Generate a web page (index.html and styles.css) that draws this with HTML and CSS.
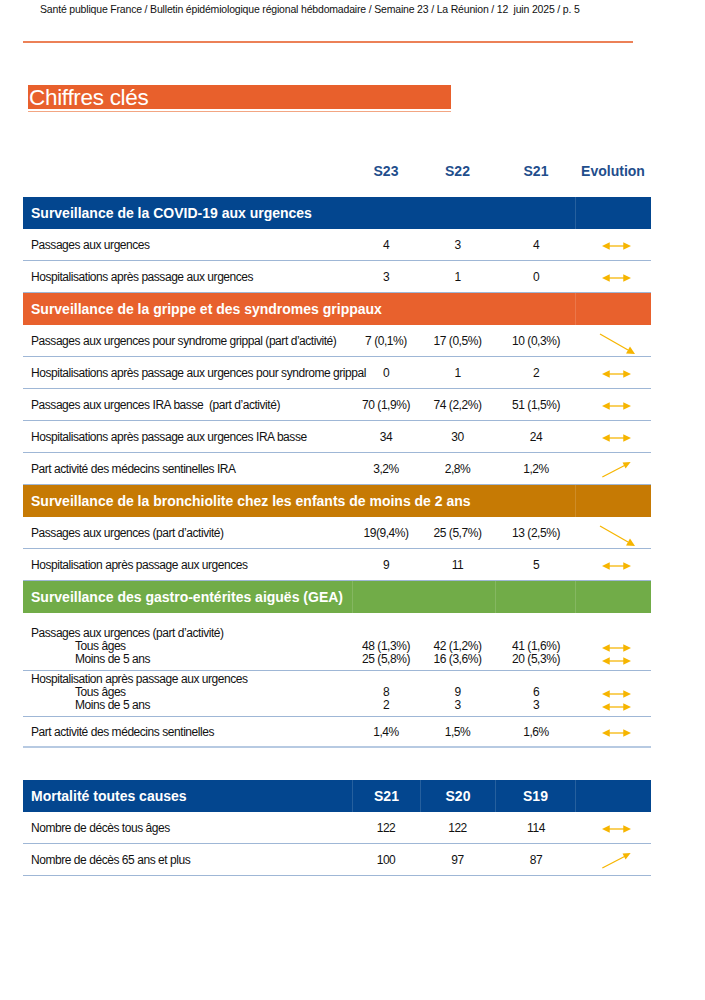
FILE: index.html
```html
<!DOCTYPE html>
<html lang="fr">
<head>
<meta charset="utf-8">
<title>Chiffres clés</title>
<link rel="stylesheet" href="styles.css">
</head>
<body>
<div class="page">
  <div class="running">Santé publique France / Bulletin épidémiologique régional hébdomadaire / Semaine 23 / La Réunion / 12&nbsp; juin 2025 / p. 5</div>
  <div class="rule"></div>

  <div class="title-wrap">
    <h1 class="title">Chiffres clés</h1>
  </div>

  <div class="table">
    <div class="colhead">
      <div></div><div>S23</div><div>S22</div><div>S21</div><div>Evolution</div>
    </div>

    <div class="sec sec-blue">
      <div class="sec-label">Surveillance de la COVID-19 aux urgences</div><div class="sep-evo"></div>
    </div>
    <div class="row"><div class="lab">Passages aux urgences</div><div>4</div><div>3</div><div>4</div><div class="evo"><svg class="a-h" viewBox="0 0 30 10"><path d="M6 5H24"/><path class="hd" d="M0 5L8 1V9ZM30 5L22 1V9Z"/></svg></div></div>
    <div class="row"><div class="lab">Hospitalisations après passage aux urgences</div><div>3</div><div>1</div><div>0</div><div class="evo"><svg class="a-h" viewBox="0 0 30 10"><path d="M6 5H24"/><path class="hd" d="M0 5L8 1V9ZM30 5L22 1V9Z"/></svg></div></div>

    <div class="sec sec-orange">
      <div class="sec-label">Surveillance de la grippe et des syndromes grippaux</div><div class="sep-evo"></div>
    </div>
    <div class="row"><div class="lab">Passages aux urgences pour syndrome grippal (part d’activité)</div><div>7 (0,1%)</div><div>17 (0,5%)</div><div>10 (0,3%)</div><div class="evo"><svg class="a-d" viewBox="0 0 37 22"><path d="M1 1L29 17"/><path class="hd" d="M36 21L27 20.5L31 13.5Z"/></svg></div></div>
    <div class="row"><div class="lab">Hospitalisations après passage aux urgences pour syndrome grippal</div><div>0</div><div>1</div><div>2</div><div class="evo"><svg class="a-h" viewBox="0 0 30 10"><path d="M6 5H24"/><path class="hd" d="M0 5L8 1V9ZM30 5L22 1V9Z"/></svg></div></div>
    <div class="row"><div class="lab">Passages aux urgences IRA basse&nbsp; (part d’activité)</div><div>70 (1,9%)</div><div>74 (2,2%)</div><div>51 (1,5%)</div><div class="evo"><svg class="a-h" viewBox="0 0 30 10"><path d="M6 5H24"/><path class="hd" d="M0 5L8 1V9ZM30 5L22 1V9Z"/></svg></div></div>
    <div class="row"><div class="lab">Hospitalisations après passage aux urgences IRA basse</div><div>34</div><div>30</div><div>24</div><div class="evo"><svg class="a-h" viewBox="0 0 30 10"><path d="M6 5H24"/><path class="hd" d="M0 5L8 1V9ZM30 5L22 1V9Z"/></svg></div></div>
    <div class="row"><div class="lab">Part activité des médecins sentinelles IRA</div><div>3,2%</div><div>2,8%</div><div>1,2%</div><div class="evo"><svg class="a-u" viewBox="0 0 32 18"><path d="M1 17L25 4.5"/><path class="hd" d="M31 1L25.6 7.9L22.4 1.7Z"/></svg></div></div>

    <div class="sec sec-ochre">
      <div class="sec-label">Surveillance de la bronchiolite chez les enfants de moins de 2 ans</div><div class="sep-evo"></div>
    </div>
    <div class="row"><div class="lab">Passages aux urgences (part d’activité)</div><div>19(9,4%)</div><div>25 (5,7%)</div><div>13 (2,5%)</div><div class="evo"><svg class="a-d" viewBox="0 0 37 22"><path d="M1 1L29 17"/><path class="hd" d="M36 21L27 20.5L31 13.5Z"/></svg></div></div>
    <div class="row"><div class="lab">Hospitalisation après passage aux urgences</div><div>9</div><div>11</div><div>5</div><div class="evo"><svg class="a-h" viewBox="0 0 30 10"><path d="M6 5H24"/><path class="hd" d="M0 5L8 1V9ZM30 5L22 1V9Z"/></svg></div></div>

    <div class="sec sec-green">
      <div class="sec-label">Surveillance des gastro-entérites aiguës (GEA)</div><div class="sep"></div><div class="sep-none"></div><div class="sep"></div><div class="sep-evo"></div>
    </div>
    <div class="block block-1">
      <div class="brow"><div class="lab">Passages aux urgences (part d’activité)</div><div></div><div></div><div></div><div></div></div>
      <div class="brow"><div class="lab sub">Tous âges</div><div>48 (1,3%)</div><div>42 (1,2%)</div><div>41 (1,6%)</div><div class="evo"><svg class="a-h" viewBox="0 0 30 10"><path d="M6 5H24"/><path class="hd" d="M0 5L8 1V9ZM30 5L22 1V9Z"/></svg></div></div>
      <div class="brow"><div class="lab sub">Moins de 5 ans</div><div>25 (5,8%)</div><div>16 (3,6%)</div><div>20 (5,3%)</div><div class="evo"><svg class="a-h" viewBox="0 0 30 10"><path d="M6 5H24"/><path class="hd" d="M0 5L8 1V9ZM30 5L22 1V9Z"/></svg></div></div>
    </div>
    <div class="block block-2">
      <div class="brow"><div class="lab">Hospitalisation après passage aux urgences</div><div></div><div></div><div></div><div></div></div>
      <div class="brow"><div class="lab sub">Tous âges</div><div>8</div><div>9</div><div>6</div><div class="evo"><svg class="a-h" viewBox="0 0 30 10"><path d="M6 5H24"/><path class="hd" d="M0 5L8 1V9ZM30 5L22 1V9Z"/></svg></div></div>
      <div class="brow"><div class="lab sub">Moins de 5 ans</div><div>2</div><div>3</div><div>3</div><div class="evo"><svg class="a-h" viewBox="0 0 30 10"><path d="M6 5H24"/><path class="hd" d="M0 5L8 1V9ZM30 5L22 1V9Z"/></svg></div></div>
    </div>
    <div class="row row-last"><div class="lab">Part activité des médecins sentinelles</div><div>1,4%</div><div>1,5%</div><div>1,6%</div><div class="evo"><svg class="a-h" viewBox="0 0 30 10"><path d="M6 5H24"/><path class="hd" d="M0 5L8 1V9ZM30 5L22 1V9Z"/></svg></div></div>
  </div>

  <div class="table table-mort">
    <div class="sec sec-blue sec-cols">
      <div class="sec-label">Mortalité toutes causes</div><div class="sep">S21</div><div class="sep">S20</div><div class="sep">S19</div><div class="sep-evo"></div>
    </div>
    <div class="row"><div class="lab">Nombre de décès tous âges</div><div>122</div><div>122</div><div>114</div><div class="evo"><svg class="a-h" viewBox="0 0 30 10"><path d="M6 5H24"/><path class="hd" d="M0 5L8 1V9ZM30 5L22 1V9Z"/></svg></div></div>
    <div class="row"><div class="lab">Nombre de décès 65 ans et plus</div><div>100</div><div>97</div><div>87</div><div class="evo"><svg class="a-u" viewBox="0 0 32 18"><path d="M1 17L25 4.5"/><path class="hd" d="M31 1L25.6 7.9L22.4 1.7Z"/></svg></div></div>
  </div>
</div>
</body>
</html>
```

FILE: styles.css
```css
* { box-sizing: border-box; }
html, body { margin: 0; padding: 0; background: #fff; }
body {
  font-family: "Liberation Sans", Arial, sans-serif;
  color: #111;
  width: 705px;
}
.page { padding-top: 3px; }

.running {
  padding-left: 40px;
  font-size: 10.5px;
  line-height: 12px;
  letter-spacing: -0.18px;
  color: #111;
  white-space: nowrap;
}
.rule {
  margin: 26px 0 0 23px;
  width: 610px;
  height: 2px;
  background: #EC8157;
}

.title-wrap {
  margin: 42px 0 0 28px;
  width: 423px;
  padding-bottom: 2px;
  border-bottom: 1px solid #F3A683;
}
.title {
  margin: 0;
  height: 24px;
  background: #E8602C;
  color: #fff;
  font-weight: normal;
  font-size: 22.5px;
  letter-spacing: -0.3px;
  line-height: 25px;
  padding-left: 1px;
}

.table {
  margin-left: 23px;
  width: 628px;
}
.colhead, .sec, .row, .brow {
  display: grid;
  grid-template-columns: 329px 68px 75px 80px 76px;
  align-items: center;
}
.colhead {
  margin-top: 48px;
  height: 22px;
  margin-bottom: 15px;
  font-weight: bold;
  font-size: 14px;
  color: #1F4E8C;
  text-align: center;
}
.colhead > div:nth-child(4) { padding-left: 2px; }

.sec {
  height: 32px;
  color: #fff;
  font-weight: bold;
  font-size: 14px;
  align-items: stretch;
}
.sec-label {
  grid-column: 1 / span 4;
  padding-left: 8px;
  display: flex;
  align-items: center;
  white-space: nowrap;
}
.sec-cols .sec-label, .sec-green .sec-label { grid-column: auto; }
.sep, .sep-none, .sep-evo {
  display: flex;
  align-items: center;
  justify-content: center;
}
.sep { border-left: 1px solid rgba(255,255,255,0.14); }
.sep-evo { grid-column: 5; border-left: 1px solid rgba(255,255,255,0.14); }
.sec-blue { background: #03468F; }
.sec-orange { background: #E8612D; }
.sec-ochre { background: #C67A04; }
.sec-green { background: #71AC48; }

.row {
  height: 32px;
  border-bottom: 1px solid #9FB7D6;
  font-size: 12px;
  letter-spacing: -0.45px;
}
.row > div, .brow > div { text-align: center; white-space: nowrap; }
.row > .lab, .brow > .lab { text-align: left; padding-left: 8px; }
.row > div:nth-child(4), .brow > div:nth-child(4) { padding-left: 2px; }

.evo { display: flex; align-items: center; justify-content: center; }

.block {
  border-bottom: 1px solid #9FB7D6;
  font-size: 12px;
  letter-spacing: -0.45px;
  padding-bottom: 4px;
}
.block-1 { padding-top: 14px; }
.block-2 { padding-top: 2px; }
.brow { height: 13px; line-height: 13px; }
.brow > .sub { padding-left: 52px; }
.row-last { border-bottom: 2px solid #B7CAE2; height: 31px; }

.table-mort { margin-top: 32px; }

svg { overflow: visible; }
svg path { stroke: #F6B500; stroke-width: 1.3; fill: none; }
svg path.hd { fill: #F6B500; stroke: none; }
.a-h { width: 29px; height: 10px; margin-top: 3px; margin-left: 6px; }
.a-d { width: 37px; height: 22px; margin-left: 8px; margin-top: 6px; }
.a-u { width: 31px; height: 17px; margin-left: 6px; margin-top: 2px; }
```
